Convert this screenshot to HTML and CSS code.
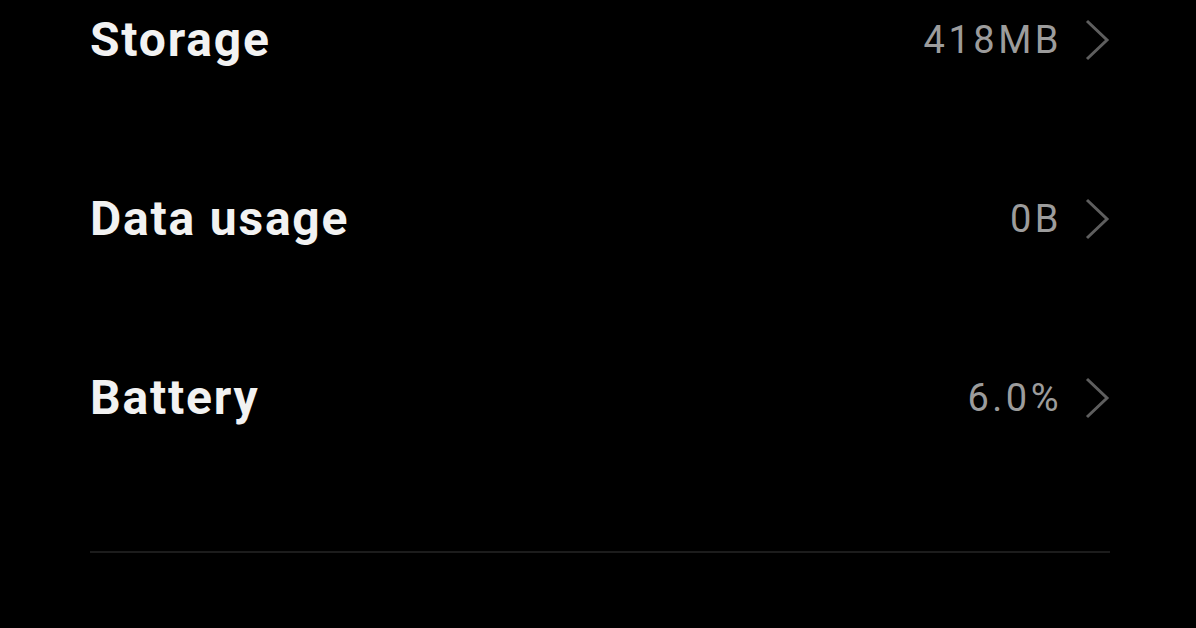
FILE: index.html
```html
<!DOCTYPE html>
<html>
<head>
<meta charset="utf-8">
<link rel="stylesheet" href="styles.css">
</head>
<body>
<div class="screen">
  <ul class="list">
    <li class="row">
      <span class="label">Storage</span>
      <span class="value">418MB</span>
      <svg class="chev" viewBox="0 0 26 44"><polyline points="3,3 23,22 3,41"/></svg>
    </li>
    <li class="row">
      <span class="label">Data usage</span>
      <span class="value">0B</span>
      <svg class="chev" viewBox="0 0 26 44"><polyline points="3,3 23,22 3,41"/></svg>
    </li>
    <li class="row">
      <span class="label">Battery</span>
      <span class="value">6.0%</span>
      <svg class="chev" viewBox="0 0 26 44"><polyline points="3,3 23,22 3,41"/></svg>
    </li>
  </ul>
  <div class="divider"></div>
</div>
</body>
</html>
```
FILE: styles.css
```css
html, body {
  margin: 0;
  padding: 0;
  background: #000;
  height: 100%;
  overflow: hidden;
}
.screen {
  padding: 0 86px 0 90px;
  font-family: Roboto, "Liberation Sans", sans-serif;
}
.list {
  list-style: none;
  margin: -50px 0 0 0;
  padding: 0;
}
.row {
  height: 179px;
  display: flex;
  align-items: center;
}
.label {
  flex: 1;
  color: #f2f2f2;
  font-weight: 700;
  font-size: 48px;
  letter-spacing: 1.8px;
}
.value {
  color: #9c9c9c;
  font-size: 38px;
  letter-spacing: 3.5px;
  margin-right: 22px;
}
.chev {
  width: 26px;
  height: 44px;
  fill: none;
  stroke: #5e5e5e;
  stroke-width: 3;
}
.divider {
  margin-top: 64px;
  height: 2px;
  background: #1c1c1c;
}
```
